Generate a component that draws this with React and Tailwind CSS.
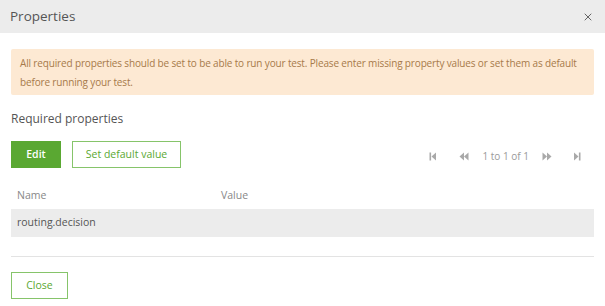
import { X } from 'lucide-react'

const font = { fontFamily: '"Open Sans", "Noto Sans", sans-serif' }

function First() {
  return (
    <svg width="8" height="9" viewBox="0 0 8 9" fill="#a9a9a9">
      <rect x="0.5" y="0.5" width="1.6" height="8" />
      <path d="M7 0.5 L2.5 4.5 L7 8.5 Z" />
    </svg>
  )
}
function Prev() {
  return (
    <svg width="10" height="9" viewBox="0 0 10 9" fill="#a9a9a9">
      <path d="M5 0.5 L0.5 4.5 L5 8.5 Z" />
      <path d="M9.5 0.5 L5 4.5 L9.5 8.5 Z" />
    </svg>
  )
}
function Next() {
  return (
    <svg width="10" height="9" viewBox="0 0 10 9" fill="#a9a9a9">
      <path d="M0.5 0.5 L5 4.5 L0.5 8.5 Z" />
      <path d="M5 0.5 L9.5 4.5 L5 8.5 Z" />
    </svg>
  )
}
function Last() {
  return (
    <svg width="8" height="9" viewBox="0 0 8 9" fill="#a9a9a9">
      <path d="M1 0.5 L5.5 4.5 L1 8.5 Z" />
      <rect x="5.9" y="0.5" width="1.6" height="8" />
    </svg>
  )
}

export default function App() {
  return (
    <div className="w-[605px] h-[306px] bg-white overflow-hidden" style={font}>
      {/* header */}
      <div className="h-[33px] bg-[#ececec] flex items-center justify-between pl-[10px] pr-[11px]">
        <div className="text-[13.5px] text-[#555]">Properties</div>
        <X size={12} strokeWidth={1.8} className="text-[#555]" />
      </div>

      <div className="px-[11px]">
        {/* alert */}
        <div className="mt-[16px] bg-[#fde9d3] rounded-[2px] pl-[9px] pr-[6px] pt-[5px] pb-[3px] text-[10px] leading-[19px] text-[#a77a4a] tracking-[-0.15px]">
          All required properties should be set to be able to run your test. Please enter missing property values or set them as default before running your test.
        </div>

        <div className="mt-[15px] text-[12px] text-[#555]">Required properties</div>

        {/* toolbar */}
        <div className="mt-[13px] flex items-center">
          <button className="h-[27px] w-[50px] bg-[#5aa832] text-white text-[10.5px] font-semibold">Edit</button>
          <button className="ml-[11px] h-[27px] w-[109px] border border-[#86c46a] text-[#5aa832] text-[10.5px]">Set default value</button>
          <div className="ml-auto mr-[13px] mt-[3px] flex items-center text-[10px] text-[#9a9a9a]">
            <First />
            <span className="ml-[22px]"><Prev /></span>
            <span className="ml-[13px]">1 to 1 of 1</span>
            <span className="ml-[13px]"><Next /></span>
            <span className="ml-[21px]"><Last /></span>
          </div>
        </div>

        {/* table */}
        <div className="mt-[20px] flex text-[10.5px] text-[#888] h-[16px] items-center">
          <div className="pl-[6px] w-[210px]">Name</div>
          <div>Value</div>
        </div>
        <div className="mt-[5px] h-[28px] bg-[#ececec] flex items-center pl-[6px] text-[10.5px] text-[#555]">
          routing.decision
        </div>

        <div className="mt-[19px] h-px bg-[#e3e3e3]" />

        <button className="mt-[15px] h-[27px] w-[57px] border border-[#86c46a] text-[#5aa832] text-[10.5px]">Close</button>
      </div>
    </div>
  )
}
